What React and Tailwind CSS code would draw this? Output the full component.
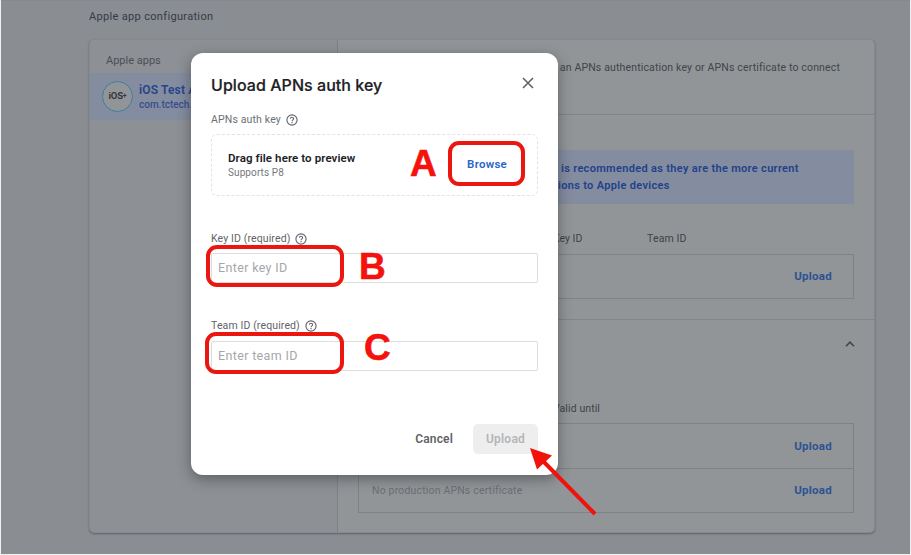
function HelpIcon() {
  return (
    <svg className="h-[12px] w-[12px] shrink-0" viewBox="0 0 12 12" fill="none" stroke="#5f6368" strokeWidth="1.1">
      <circle cx="6" cy="6" r="5.1" />
      <path d="M4.4 4.8c0-2.1 3.2-2.1 3.2-.1C7.6 5.900 6 5.800 6 7.300M6 8v1.200" />
    </svg>
  );
}

function UploadLink() {
  return <span className="mr-[21px] text-[11.500px] font-bold tracking-[0.250px] text-[#2d5293]">Upload</span>;
}

function Background() {
  return (
    <div className="flex h-[554px] flex-col border-t border-[#85888c] bg-[#8a8d91] pl-[88px]">
      <h1 className="mt-[8px] h-[16px] text-[11px] leading-[16px] tracking-[0.330px] text-[#333b49]">Apple app configuration</h1>
      <div className="mt-[14px] flex h-[494px] w-[786px] overflow-hidden rounded-[5px] border border-[#85888c] bg-[#929598] shadow-[0_1px_2px_rgba(45,50,60,0.45)]">
        <aside className="w-[248px] shrink-0 border-r border-[#7e8185] bg-[#8d9094]">
          <div className="h-[33px] pt-[13px] pl-[16px] text-[11px] leading-[16px] text-[#4c4f54]">Apple apps</div>
          <div className="flex h-[47px] items-center bg-[#848ca0] pl-[12px]">
            <div className="flex h-[31px] w-[31px] shrink-0 items-center justify-center rounded-full border-[1.500px] border-[#417f9c] bg-[#919598] font-[Roboto] text-[9.500px] font-bold tracking-[-0.200px] text-[#33373b]">
              iOS<span className="text-[7px]">+</span>
            </div>
            <div className="ml-[6px] whitespace-nowrap">
              <div className="text-[12px] leading-[16px] font-semibold tracking-[0.150px] text-[#264489]">iOS Test App</div>
              <div className="text-[10px] leading-[14px] font-medium text-[#344f8e]">com.tctech.app</div>
            </div>
          </div>
        </aside>
        <main className="flex flex-1 flex-col">
          <div className="h-[75px] border-b border-[#818488] pt-[20px] pr-[34px] text-right text-[10.500px] leading-[16px] tracking-[0.150px] whitespace-nowrap text-[#414448]">
            an APNs authentication key or APNs certificate to connect
          </div>
          <div className="h-[205px] border-b border-[#818488] pl-[20px]">
            <div className="mt-[35px] h-[54px] w-[496px] bg-[#848ca0] pt-[10px] pl-[203px] text-[11px] leading-[17px] font-semibold tracking-[0.320px] whitespace-nowrap text-[#21418a]">
              <div>is recommended as they are the more current</div>
              <div className="-ml-[3px]">ions to Apple devices</div>
            </div>
            <div className="mt-[27px] flex h-[16px] w-[496px] pl-[195px] text-[10.500px] leading-[16px] text-[#3e4146]">
              <span className="w-[94px]">Key ID</span>
              <span className="tracking-[0.150px]">Team ID</span>
            </div>
            <div className="mt-[7px] flex h-[45px] w-[496px] items-center justify-end border border-[#7e8285]">
              <UploadLink />
            </div>
          </div>
          <div className="flex-1 pl-[20px]">
            <div className="flex h-[47px] w-[497px] items-center justify-end">
              <svg className="h-[8px] w-[10px]" viewBox="0 0 10 8" fill="none" stroke="#414448" strokeWidth="1.600">
                <path d="M1 6.200 5 2.200 9 6.200" />
              </svg>
            </div>
            <div className="mt-[34px] h-[16px] pl-[195px] text-[10.500px] leading-[16px] tracking-[0.100px] text-[#3e4146]">Valid until</div>
            <div className="mt-[6px] w-[496px] border border-[#7e8285]">
              <div className="flex h-[45px] items-center justify-end border-b border-[#7e8285] pt-px">
                <UploadLink />
              </div>
              <div className="flex h-[43px] items-center justify-between pl-[13px]">
                <span className="text-[10.500px] tracking-[0.170px] text-[#6b6f73]">No production APNs certificate</span>
                <UploadLink />
              </div>
            </div>
          </div>
        </main>
      </div>
    </div>
  );
}

function Field({ label, placeholder }) {
  return (
    <div className="h-[87.500px]">
      <label className="flex h-[14px] items-center gap-[5px] pt-px text-[10.500px] tracking-[0.120px] text-[#5f6368]">
        {label}
        <HelpIcon />
      </label>
      <div className="mt-[8px] flex h-[30px] items-center rounded-[2px] border border-[#dcdddf] pt-px pl-[6px] text-[12.500px] tracking-[0.350px] text-[#a5a7aa]">
        {placeholder}
      </div>
    </div>
  );
}

function Dialog() {
  return (
    <div className="absolute top-[53px] left-[191px] flex h-[422px] w-[367px] flex-col rounded-[12px] bg-white px-[20px] shadow-[0_4px_14px_rgba(30,34,40,0.45)]">
      <div className="mt-[20px] flex h-[24px] items-center justify-between">
        <h2 className="font-[Inter] text-[16px] font-medium tracking-[0.050px] whitespace-nowrap text-[#202124] [-webkit-text-stroke:0.200px_#202124]">Upload APNs auth key</h2>
        <svg className="mr-[4px] mb-[4px] h-[12px] w-[12px]" viewBox="0 0 12 12" stroke="#5f6368" strokeWidth="1.600">
          <path d="M1 1l10 10M11 1 1 11" />
        </svg>
      </div>
      <div className="mt-[15px] flex h-[14px] items-center gap-[5px] pt-px text-[10.500px] tracking-[0.150px] text-[#6c7075]">
        APNs auth key
        <HelpIcon />
      </div>
      <div className="mt-[8px] flex h-[62px] items-center justify-between rounded-[6px] border border-dashed border-[#e2e3e6] pr-[30px] pl-[16px]">
        <div>
          <div className="text-[11.500px] leading-[16px] font-semibold tracking-[0.100px] text-[#202124]">Drag file here to preview</div>
          <div className="text-[10px] leading-[14px] tracking-[0.100px] text-[#75787c]">Supports P8</div>
        </div>
        <span className="text-[11.500px] font-semibold tracking-[0.250px] text-[#2767c5]">Browse</span>
      </div>
      <div className="mt-[35px]">
        <Field label="Key ID (required)" placeholder="Enter key ID" />
        <Field label="Team ID (required)" placeholder="Enter team ID" />
      </div>
      <div className="mt-[18px] flex h-[30px] items-center justify-end">
        <span className="mr-[20px] text-[12px] font-semibold tracking-[0.150px] text-[#5f6368]">Cancel</span>
        <span className="flex h-[30px] w-[65px] items-center justify-center rounded-[5px] bg-[#eeeeee] text-[12px] font-semibold tracking-[0.250px] text-[#b4b5b7]">Upload</span>
      </div>
    </div>
  );
}

function Annotations() {
  return (
    <div className="font-['Liberation_Sans',sans-serif] text-[37px] leading-[38px] font-bold text-[#f5120c] [-webkit-text-stroke:0.600px_#f5120c]">
      <div className="absolute top-[141px] left-[448px] h-[45px] w-[77px] rounded-[11px] border-4 border-[#ea160f]" />
      <div className="absolute top-[245px] left-[206px] h-[42px] w-[138px] rounded-[11px] border-4 border-[#ea160f]" />
      <div className="absolute top-[332px] left-[205px] h-[42px] w-[139px] rounded-[11px] border-4 border-[#ea160f]" />
      <span className="absolute top-[145px] left-[410px]">A</span>
      <span className="absolute top-[248px] left-[359px]">B</span>
      <span className="absolute top-[329px] left-[364px]">C</span>
      <svg className="absolute top-[444px] left-[526px] h-[76px] w-[76px]" viewBox="526 444 76 76">
        <path d="M542 460 595 514" stroke="#f2120c" strokeWidth="4" />
        <path d="M530 448 552 455.500 537 469.500Z" fill="#f2120c" />
      </svg>
    </div>
  );
}

export default function App() {
  return (
    <div className="relative h-[555px] w-[911px] overflow-hidden bg-[#eff1f3] px-px font-[Roboto,sans-serif]">
      <Background />
      <Dialog />
      <Annotations />
    </div>
  );
}
